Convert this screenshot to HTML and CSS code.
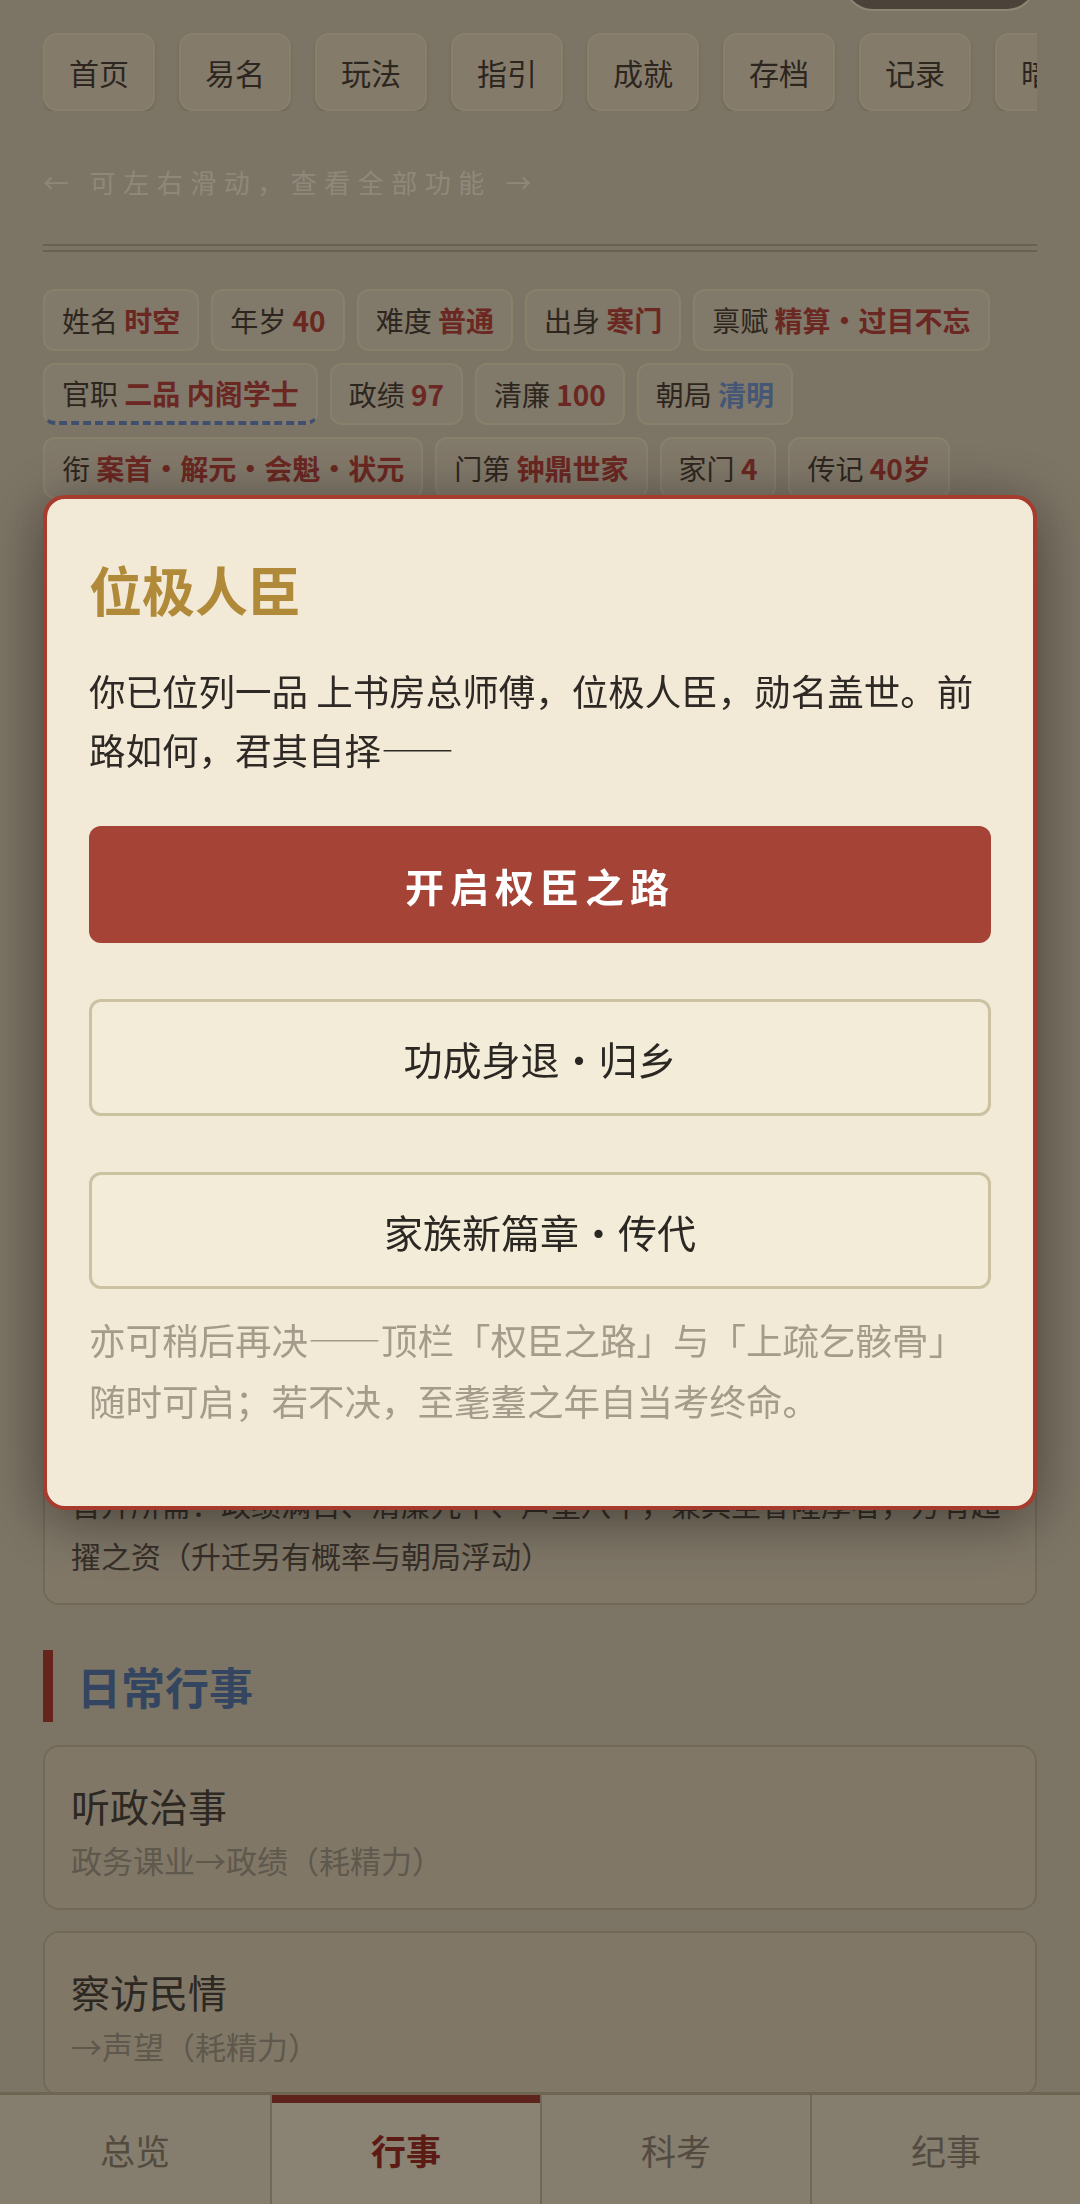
FILE: index.html
```html
<!DOCTYPE html>
<html lang="zh-CN">
  <head>
    <meta charset="UTF-8" />
    <title>宦海浮沉</title>
    <link rel="stylesheet" href="styles.css">
  </head>
  <body>
    <div class="page">
      <div class="toolbar">
        <div class="toolbar-pill"></div>
      </div>

      <!-- 顶部功能栏 -->
      <div class="nav">
        <button class="nav-btn">首页</button>
        <button class="nav-btn">易名</button>
        <button class="nav-btn">玩法</button>
        <button class="nav-btn">指引</button>
        <button class="nav-btn">成就</button>
        <button class="nav-btn">存档</button>
        <button class="nav-btn">记录</button>
        <button class="nav-btn">暗色</button>
      </div>
      <p class="hint">← 可左右滑动，查看全部功能 →</p>
      <div class="divider"></div>

      <!-- 人物属性 -->
      <div class="chips">
        <span class="chip">姓名 <b>时空</b></span>
        <span class="chip">年岁 <b>40</b></span>
        <span class="chip">难度 <b>普通</b></span>
        <span class="chip">出身 <b>寒门</b></span>
        <span class="chip">禀赋 <b>精算・过目不忘</b></span>
        <span class="chip chip-office">官职 <b>二品 内阁学士</b></span>
        <span class="chip">政绩 <b>97</b></span>
        <span class="chip">清廉 <b>100</b></span>
        <span class="chip">朝局 <b class="blue">清明</b></span>
        <span class="chip">衔 <b>案首・解元・会魁・状元</b></span>
        <span class="chip">门第 <b>钟鼎世家</b></span>
        <span class="chip">家门 <b>4</b></span>
        <span class="chip">传记 <b>40岁</b></span>
      </div>

      <h2 class="section-title">仕途进阶</h2>
      <div class="card card-tall">
        <div class="card-title">下一品阶：一品 上书房总师傅</div>
        <p class="card-desc">晋升所需：政绩满百、清廉九十、声望八十，兼具圣眷隆厚者，方有超擢之资（升迁另有概率与朝局浮动）</p>
      </div>

      <h2 class="section-title">日常行事</h2>
      <div class="card">
        <div class="card-title">听政治事</div>
        <p class="card-sub">政务课业→政绩（耗精力）</p>
      </div>
      <div class="card">
        <div class="card-title">察访民情</div>
        <p class="card-sub">→声望（耗精力）</p>
      </div>
      <div class="card">
        <div class="card-title">闭门读书</div>
        <p class="card-sub">→学识（耗精力）</p>
      </div>
    </div>

    <!-- 底部标签栏 -->
    <div class="tabbar">
      <div class="tab">总览</div>
      <div class="tab active">行事</div>
      <div class="tab">科考</div>
      <div class="tab">纪事</div>
    </div>

    <!-- 弹窗 -->
    <div class="mask">
      <div class="modal">
        <h1 class="modal-title">位极人臣</h1>
        <p class="modal-text">你已位列一品 上书房总师傅，位极人臣，勋名盖世。前路如何，君其自择——</p>
        <button class="modal-btn primary">开启权臣之路</button>
        <button class="modal-btn">功成身退・归乡</button>
        <button class="modal-btn">家族新篇章・传代</button>
        <p class="modal-note">亦可稍后再决——顶栏「权臣之路」与「上疏乞骸骨」随时可启；若不决，至耄耋之年自当考终命。</p>
      </div>
    </div>
  </body>
</html>
```

FILE: styles.css
```css
body {
  margin: 0;
  background: #d6c8ae;
  font-family: "Noto Sans CJK SC", "Noto Sans", sans-serif;
  color: #564a3c;
}

.page {
  padding: 0 43px 200px;
}

/* 顶部 */
.toolbar {
  height: 11px;
  overflow: hidden;
  display: flex;
  justify-content: flex-end;
  align-items: flex-end;
}
.toolbar-pill {
  flex: 0 0 190px;
  height: 60px;
  border: 2px solid #f5e6c8;
  border-radius: 30px;
  background: #817464;
}

/* 功能栏 */
.nav {
  display: flex;
  gap: 24px;
  margin-top: 22px;
  overflow: hidden;
}
.nav-btn {
  flex: 0 0 112px;
  height: 78px;
  border: 2px solid #ecdcba;
  border-radius: 14px;
  background: #e4d5b9;
  box-shadow: 0 2px 3px rgba(0, 0, 0, 0.12);
  font-family: inherit;
  font-size: 30px;
  color: #4e4336;
  white-space: nowrap;
  overflow: hidden;
}
.hint {
  margin: 53px 0 0;
  font-size: 26px;
  line-height: 36px;
  letter-spacing: 7.5px;
  color: #f7ebd2;
}
.divider {
  margin-top: 44px;
  height: 4px;
  border-top: 2px solid #b5a78a;
  border-bottom: 2px solid #b5a78a;
}

/* 属性标签 */
.chips {
  display: flex;
  flex-wrap: wrap;
  gap: 12px;
  margin-top: 37px;
}
.chip {
  box-sizing: border-box;
  height: 62px;
  display: flex;
  align-items: center;
  padding: 0 17px;
  border: 2px solid #ecdcba;
  border-radius: 12px;
  background: #dfd0b6;
  font-size: 28px;
  color: #4e4336;
  white-space: pre;
}
.chip b {
  color: #b8443a;
}
.chip b.blue {
  color: #7896cc;
}
.chip-office {
  border-bottom: 4px dashed #6f89bd;
}

/* 区块标题 */
.section-title {
  margin: 45px 0 0;
  padding-left: 24px;
  border-left: 10px solid #b13e32;
  font-size: 44px;
  line-height: 72px;
  color: #5878a8;
}

/* 卡片 */
.card {
  box-sizing: border-box;
  margin-top: 21px;
  padding: 32px 26px 27px;
  border: 2px solid #c4b696;
  border-radius: 16px;
  background: #dccdb2;
}
.section-title + .card {
  margin-top: 23px;
}
.card-title {
  font-size: 39px;
  line-height: 53px;
  color: #4e453b;
}
.card-sub {
  margin: 7px 0 0;
  font-size: 31px;
  line-height: 42px;
  color: #a49883;
}
.card-tall {
  min-height: 966px;
  display: flex;
  flex-direction: column;
  padding-bottom: 22px;
}
.card-desc {
  margin: auto 0 0;
  font-size: 30px;
  line-height: 52px;
  color: #5e5246;
}

/* 底部标签栏 */
.tabbar {
  position: fixed;
  left: 0;
  right: 0;
  bottom: 0;
  height: 112px;
  box-sizing: border-box;
  display: grid;
  grid-template-columns: repeat(4, 1fr);
  border-top: 3px solid #bdae8f;
  background: #e5d8be;
}
.tab {
  display: flex;
  align-items: center;
  justify-content: center;
  border-left: 2px solid #c1b398;
  font-size: 35px;
  color: #8f826e;
}
.tab:first-child {
  border-left: none;
}
.tab.active {
  background: #eee0c6;
  box-shadow: inset 0 8px 0 #a43d33;
  color: #a02f26;
  font-weight: bold;
}

/* 弹窗 */
.mask {
  position: fixed;
  inset: 0;
  background: rgba(0, 0, 0, 0.42);
  display: flex;
  justify-content: center;
  align-items: flex-start;
  padding-top: 495px;
}
.modal {
  box-sizing: border-box;
  width: 994px;
  padding: 56px 42px 75px;
  border: 4px solid #a63b2e;
  border-radius: 22px;
  background: #f2ead7;
  box-shadow: 0 10px 60px rgba(0, 0, 0, 0.45);
}
.modal-title {
  margin: 0;
  font-size: 53px;
  line-height: 68px;
  color: #b08a38;
}
.modal-text {
  margin: 38px 0 0;
  font-size: 36.5px;
  line-height: 59px;
  color: #2e2924;
}
.modal-btn {
  display: block;
  box-sizing: border-box;
  width: 100%;
  height: 117px;
  margin-top: 56px;
  border: 3px solid #cbc2a1;
  border-radius: 12px;
  background: #f3ecd9;
  font-family: inherit;
  font-size: 39px;
  color: #2b2722;
}
.modal-btn.primary {
  margin-top: 47px;
  border: none;
  background: #a54336;
  color: #fff;
  font-size: 39px;
  font-weight: bold;
  letter-spacing: 6px;
}
.modal-note {
  margin: 20px 0 0;
  font-size: 36.5px;
  line-height: 61px;
  color: #a49b8a;
}
```
